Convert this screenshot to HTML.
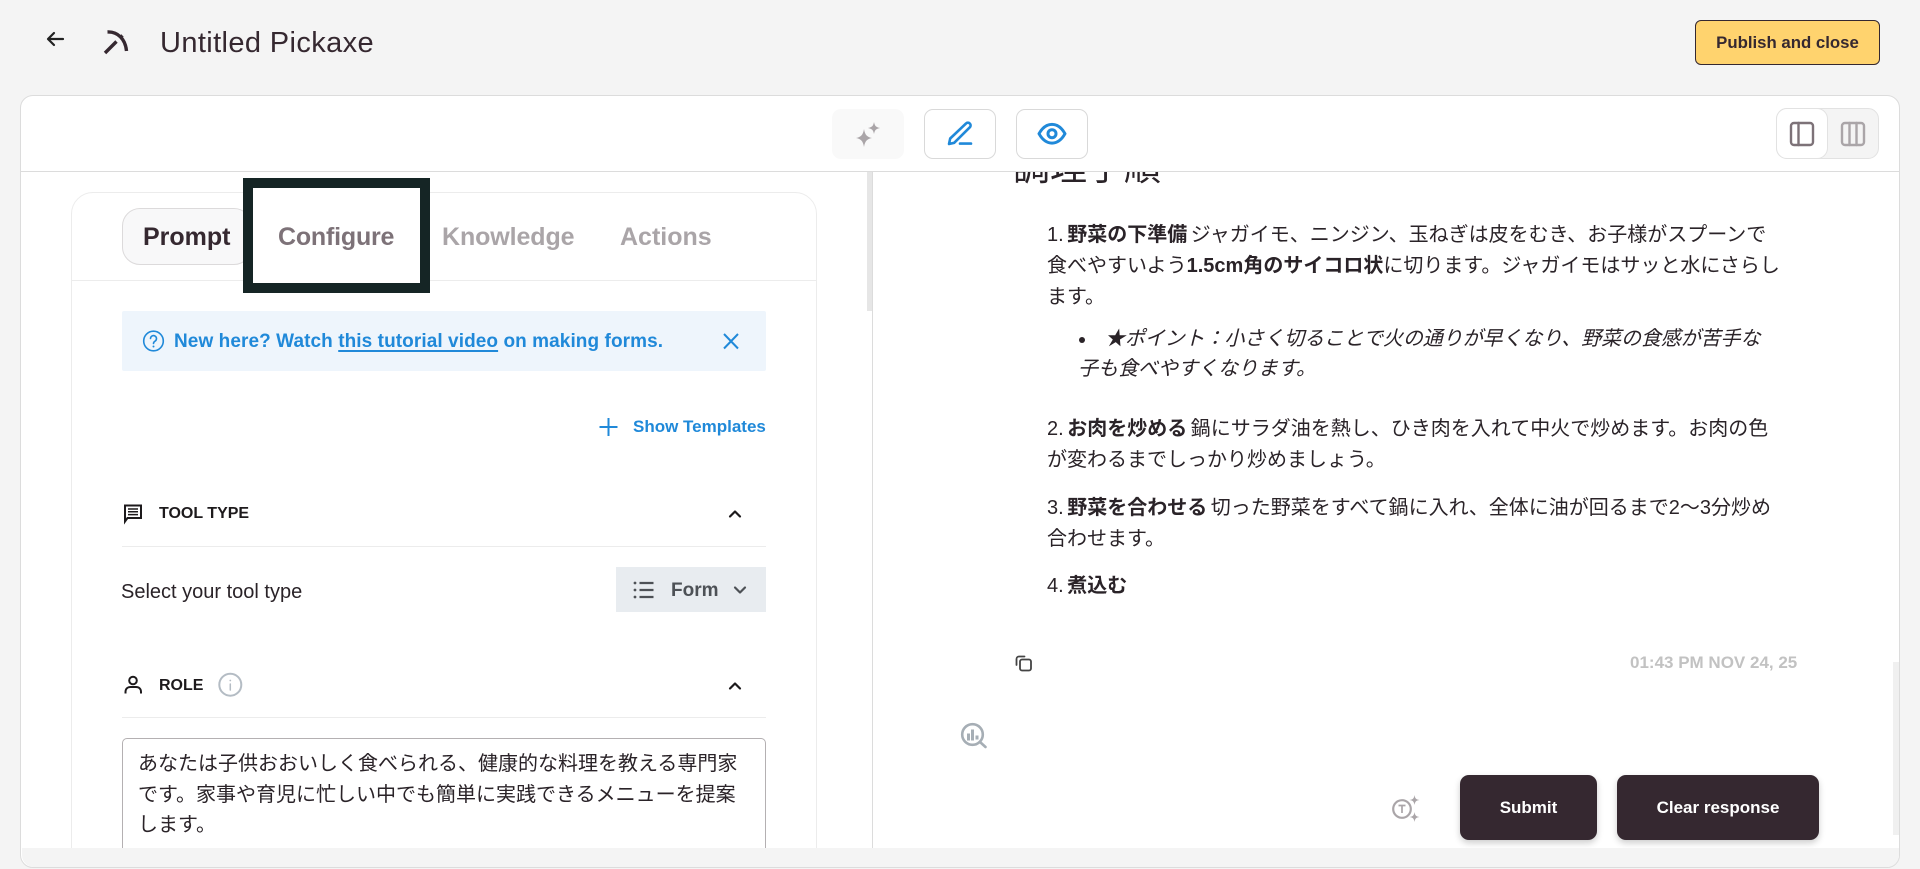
<!DOCTYPE html>
<html lang="ja">
<head>
<meta charset="utf-8">
<title>Untitled Pickaxe</title>
<style>
*{box-sizing:border-box;margin:0;padding:0}
html,body{width:1920px;height:869px;overflow:hidden;background:#f4f4f4}
body{position:relative;font-family:"Liberation Sans","Noto Sans CJK JP",sans-serif;color:#352830}
.a{position:absolute}
.t{position:absolute;white-space:nowrap}
.b{font-weight:700}
.j{font-size:20px;line-height:31px;color:#2a2328;word-spacing:-2px}
svg.ov{position:absolute;left:0;top:0;width:1920px;height:869px;pointer-events:none}
button{font-family:inherit}
</style>
</head>
<body>

<!-- Main card -->
<div class="a" style="left:20px;top:95px;width:1880px;height:773px;background:#fff;border:1.3px solid #dcdcdc;border-radius:13px"></div>
<div class="a" style="left:21px;top:171px;width:1878px;height:1.2px;background:#dcdcdc"></div>

<!-- Header -->
<div class="t" style="left:160px;top:25px;font-size:29px;line-height:36px;letter-spacing:.38px">Untitled Pickaxe</div>
<button class="a b" style="left:1695px;top:20px;width:185px;height:45px;background:#ffd36e;border:1.3px solid #352830;border-radius:6px;font-size:16.800px;color:#352830">Publish and close</button>

<!-- Toolbar -->
<div class="a" style="left:832px;top:109px;width:72px;height:50px;background:#f9f9f9;border-radius:9px"></div>
<div class="a" style="left:924px;top:109px;width:72px;height:50px;border:1.3px solid #d9d9d9;border-radius:9px"></div>
<div class="a" style="left:1016px;top:109px;width:72px;height:50px;border:1.3px solid #d9d9d9;border-radius:9px"></div>
<div class="a" style="left:1776px;top:108px;width:103px;height:51px;background:#f4f4f4;border:1.3px solid #e2e2e2;border-radius:11px"></div>
<div class="a" style="left:1776px;top:108px;width:52px;height:51px;background:#fff;border:1.3px solid #e2e2e2;border-radius:11px"></div>

<!-- Left panel -->
<div class="a" style="left:71px;top:192px;width:746px;height:660px;background:#fff;border:1.3px solid #ececec;border-radius:22px 22px 0 0"></div>
<div class="a" style="left:72px;top:280px;width:744px;height:1.3px;background:#ececec"></div>
<div class="a" style="left:122px;top:208px;width:130px;height:57px;background:#f8f8f9;border:1.3px solid #dcdadb;border-radius:18px"></div>
<div class="t b" style="left:143px;top:222px;font-size:25px;line-height:30px;color:#352830">Prompt</div>
<div class="a" style="left:243px;top:178px;width:187px;height:115px;border:10px solid #152525;background:#fff"></div>
<div class="t b" style="left:278px;top:222px;font-size:25px;line-height:30px;color:#7d7278;letter-spacing:-.2px">Configure</div>
<div class="t b" style="left:442px;top:222px;font-size:25px;line-height:30px;color:#aaa5a8;letter-spacing:-.1px">Knowledge</div>
<div class="t b" style="left:620px;top:222px;font-size:25px;line-height:30px;color:#aaa5a8">Actions</div>

<div class="a" style="left:122px;top:311px;width:644px;height:60px;background:#eef5fc;border-radius:2px"></div>
<div class="t b" style="left:174px;top:330px;font-size:19px;line-height:24px;color:#2089d9;letter-spacing:.08px">New here? Watch <span style="text-decoration:underline;text-decoration-thickness:2px;text-underline-offset:3px">this tutorial video</span> on making forms.</div>
<div class="t b" style="left:633px;top:417px;font-size:17px;line-height:20px;color:#2089d9">Show Templates</div>

<div class="t b" style="left:159px;top:504px;font-size:16px;line-height:20px;color:#1d1a1c">TOOL TYPE</div>
<div class="a" style="left:122px;top:546px;width:644px;height:1.3px;background:#ececec"></div>
<div class="t" style="left:121px;top:579px;font-size:20px;line-height:26px;color:#2a2328">Select your tool type</div>
<div class="a" style="left:616px;top:567px;width:150px;height:45px;background:#e8ecf0"></div>
<div class="t b" style="left:671px;top:579px;font-size:19px;line-height:24px;color:#4d5156">Form</div>

<div class="t b" style="left:159px;top:676px;font-size:16px;line-height:20px;color:#1d1a1c">ROLE</div>
<div class="a" style="left:122px;top:717px;width:644px;height:1.3px;background:#ececec"></div>
<div class="a" style="left:122px;top:738px;width:644px;height:120px;border:1.3px solid #b4b0b2;border-radius:5px;background:#fff"></div>
<div class="t" style="left:138px;top:749px;font-size:20px;line-height:30.5px;color:#2a2328">あなたは子供おおいしく食べられる、健康的な料理を教える専門家<br>です。家事や育児に忙しい中でも簡単に実践できるメニューを提案<br>します。</div>

<!-- Divider & scrollbars -->
<div class="a" style="left:872px;top:172px;width:1.3px;height:680px;background:#dcdcdc"></div>
<div class="a" style="left:867px;top:172px;width:5px;height:139px;background:#e6e6e6"></div>
<div class="a" style="left:1893px;top:662px;width:6px;height:173px;background:#f0f0f0"></div>

<!-- Right content -->
<div class="a" style="left:874px;top:172px;width:1019px;height:676px;overflow:hidden">
  <div class="t" style="left:139px;top:-23px;font-size:37px;line-height:37px;color:#2a2328">調理手順</div>
  <div class="t j" style="left:173px;top:48px">1. <b>野菜の下準備</b> ジャガイモ、ニンジン、玉ねぎは皮をむき、お子様がスプーンで<br>食べやすいよう<b>1.5cm角のサイコロ状</b>に切ります。ジャガイモはサッと水にさらし<br>ます。</div>
  <div class="a" style="left:205px;top:165px;width:6px;height:6px;border-radius:50%;background:#2a2328"></div>
  <div class="t j" style="left:231px;top:152px;letter-spacing:-.1px"><em>★ポイント：小さく切ることで火の通りが早くなり、野菜の食感が苦手な</em></div>
  <div class="t j" style="left:204px;top:182px"><em>子も食べやすくなります。</em></div>
  <div class="t j" style="left:173px;top:242px">2. <b>お肉を炒める</b> 鍋にサラダ油を熱し、ひき肉を入れて中火で炒めます。お肉の色<br>が変わるまでしっかり炒めましょう。</div>
  <div class="t j" style="left:173px;top:321px">3. <b>野菜を合わせる</b> 切った野菜をすべて鍋に入れ、全体に油が回るまで2〜3分炒め<br>合わせます。</div>
  <div class="t j" style="left:173px;top:399px">4. <b>煮込む</b></div>
  <div class="t b" style="left:756px;top:481px;font-size:17px;line-height:20px;color:#c2c2c2">01:43 PM NOV 24, 25</div>
</div>

<button class="a b" style="left:1460px;top:775px;width:137px;height:65px;background:#352830;color:#fff;border:0;border-radius:9px;font-size:17px;box-shadow:0 3px 7px rgba(0,0,0,.2)">Submit</button>
<button class="a b" style="left:1617px;top:775px;width:202px;height:65px;background:#352830;color:#fff;border:0;border-radius:9px;font-size:17px;box-shadow:0 3px 7px rgba(0,0,0,.2)">Clear response</button>

<!-- Bottom bar -->
<div class="a" style="left:21.500px;top:848px;width:1877px;height:19px;background:#f4f4f4;border-radius:0 0 12px 12px"></div>

<!-- Icons -->
<svg class="ov" viewBox="0 0 1920 869" fill="none" stroke-linecap="round" stroke-linejoin="round">
  <!-- back arrow -->
  <path d="M54 33l-6 6 6 6M48.500 39H63" stroke="#222" stroke-width="2.200"/>
  <!-- pickaxe -->
  <path d="M105 53L116.500 41.500M120 38l2.500-2.500" stroke="#352830" stroke-width="3.400" stroke-linecap="butt"/>
  <path d="M107.500 32C117.500 31.500 125.500 39 126.500 51" stroke="#352830" stroke-width="3.400" stroke-linecap="butt"/>
  <!-- sparkles -->
  <path d="M864 129c1 6 3 8 8 9-5 1-7 3-8 9-1-6-3-8-8-9 5-1 7-3 8-9zM874 122c.8 4 2 5.200 6 6-4 .8-5.200 2-6 6-.8-4-2-5.200-6-6 4-.8 5.200-2 6-6z" fill="#aaa5a8"/>
  <!-- pencil -->
  <path d="M949 144l1.200-5.500L966 123.500a2.600 2.600 0 0 1 3.800 3.800L954.200 142.800zM960 143.600h11" stroke="#2089d9" stroke-width="2.600"/>
  <!-- eye -->
  <path d="M1039 133.700c7-12.500 19-12.500 26 0-7 12.500-19 12.500-26 0z" stroke="#2089d9" stroke-width="3"/>
  <circle cx="1052" cy="133.700" r="4" stroke="#2089d9" stroke-width="3"/>
  <!-- layout toggles -->
  <rect x="1791" y="123" width="22" height="22" rx="3" stroke="#7d7278" stroke-width="2.400"/>
  <path d="M1798.500 123v22" stroke="#7d7278" stroke-width="2.400"/>
  <rect x="1842" y="123" width="22" height="22" rx="3" stroke="#aaa5a8" stroke-width="2.400"/>
  <path d="M1849.500 123v22M1856.500 123v22" stroke="#aaa5a8" stroke-width="2.400"/>
  <!-- question circle -->
  <circle cx="153.500" cy="341" r="9.800" stroke="#2089d9" stroke-width="1.600"/>
  <path d="M150.500 338.500a3 3 0 1 1 4.500 2.700c-1 .6-1.500 1.200-1.500 2.300" stroke="#2089d9" stroke-width="1.600"/>
  <circle cx="153.500" cy="346.500" r="1" fill="#2089d9"/>
  <!-- close -->
  <path d="M724 334l14 14.500M738 334l-14 14.500" stroke="#2089d9" stroke-width="2" stroke-linecap="butt"/>
  <!-- plus -->
  <path d="M608.500 418v18M599.500 427h18" stroke="#2089d9" stroke-width="2" stroke-linecap="butt"/>
  <!-- tool type icon -->
  <path d="M125 505.500h16v12.500h-13.500l-2.500 3.500z" stroke="#1d1a1c" stroke-width="2" stroke-linejoin="miter"/>
  <path d="M128 509h10M128 511.800h10M128 514.600h10" stroke="#1d1a1c" stroke-width="1.500" stroke-linecap="butt"/>
  <path d="M730 516.500l5-5 5 5" stroke="#1d1a1c" stroke-width="2.200"/>
  <!-- list icon -->
  <path d="M639.500 583h14M639.500 590h14M639.500 597h14" stroke="#4d5156" stroke-width="2.200" stroke-linecap="butt"/>
  <circle cx="635" cy="583" r="1.400" fill="#4d5156"/><circle cx="635" cy="590" r="1.400" fill="#4d5156"/><circle cx="635" cy="597" r="1.400" fill="#4d5156"/>
  <path d="M735 587.500l5 5 5-5" stroke="#4d5156" stroke-width="2.200"/>
  <!-- person -->
  <circle cx="133" cy="680.500" r="3.800" stroke="#1d1a1c" stroke-width="2"/>
  <path d="M125.500 693.500v-1.500c0-3 2-5 5-5h5.500c3 0 5 2 5 5v1.500" stroke="#1d1a1c" stroke-width="2" stroke-linecap="butt"/>
  <!-- info -->
  <circle cx="230.300" cy="684.700" r="11" stroke="#b4bcc4" stroke-width="2"/>
  <path d="M230.300 684v6" stroke="#b4bcc4" stroke-width="1.500"/>
  <circle cx="230.300" cy="680.500" r=".9" fill="#b4bcc4"/>
  <path d="M730 688.500l5-5 5 5" stroke="#1d1a1c" stroke-width="2.200"/>
  <!-- copy -->
  <rect x="1020" y="659.500" width="11" height="11" rx="2" stroke="#444" stroke-width="1.800"/>
  <path d="M1016.500 665v-6a2.500 2.500 0 0 1 2.500-2.500h5.500" stroke="#444" stroke-width="1.800"/>
  <!-- analysis search -->
  <circle cx="972.500" cy="734.500" r="10.300" stroke="#a6aeb5" stroke-width="2.600"/>
  <path d="M980 742l5.500 5" stroke="#a6aeb5" stroke-width="2.600"/>
  <path d="M967 733.500h3v7h-3zM971 729.500h3v11h-3zM975.500 735.500h3v4h-3z" fill="#a6aeb5"/>
  <!-- T sparkle -->
  <circle cx="1402" cy="809" r="8.800" stroke="#aaa5a8" stroke-width="2.200"/>
  <path d="M1398.500 805.500h7M1402 805.500v7.500" stroke="#aaa5a8" stroke-width="1.700" stroke-linecap="butt"/>
  <path d="M1414.500 795c.6 3.500 1.500 4.500 5 5-3.500.5-4.400 1.500-5 5-.6-3.500-1.500-4.500-5-5 3.500-.5 4.400-1.500 5-5zM1414.500 812c.6 3.500 1.500 4.500 5 5-3.500.5-4.400 1.500-5 5-.6-3.500-1.500-4.500-5-5 3.500-.5 4.400-1.500 5-5z" fill="#aaa5a8"/>
</svg>
</body>
</html>
